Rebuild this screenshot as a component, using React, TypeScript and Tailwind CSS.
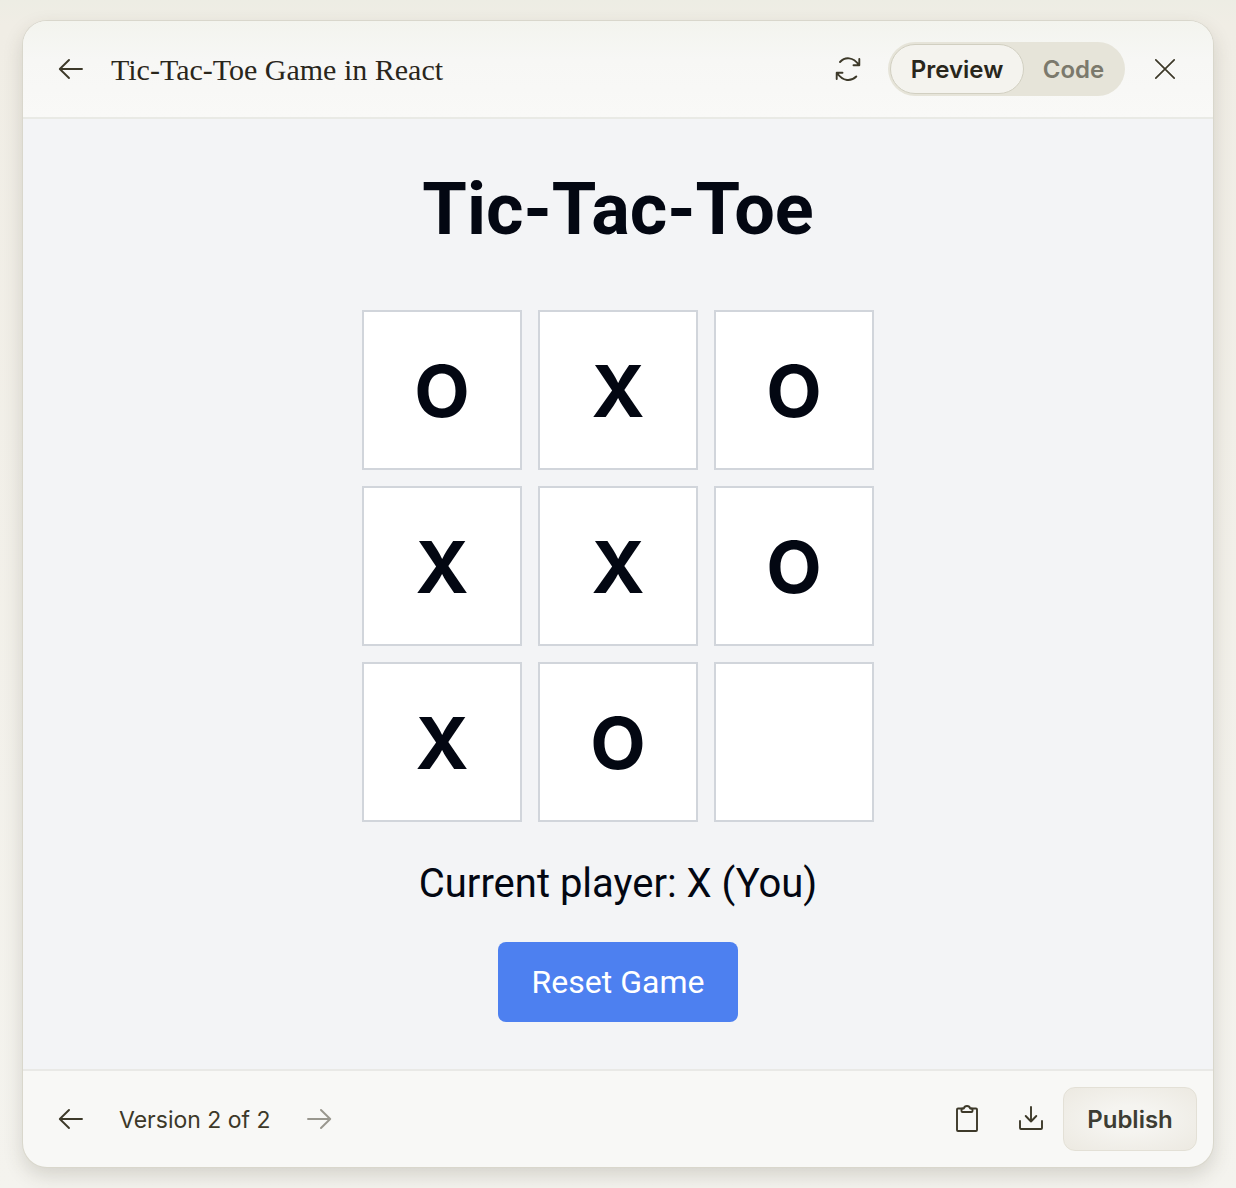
import { useState } from "react";
import type { ReactNode } from "react";

function Icon({ children }: { children: ReactNode }) {
  return (
    <svg
      className="size-8"
      viewBox="0 0 32 32"
      fill="none"
      stroke="currentColor"
      strokeWidth="1.9"
      strokeLinecap="round"
      strokeLinejoin="round"
      aria-hidden="true"
    >
      {children}
    </svg>
  );
}

function ArrowLeft() {
  return (
    <Icon>
      <path d="M27 16H5M14 7 4.800 16l9.200 9" />
    </Icon>
  );
}

const iconButton =
  "flex size-16 shrink-0 items-center justify-center rounded-xl text-[#3d3929] disabled:opacity-50";

export default function App() {
  const [board, setBoard] = useState(["O", "X", "O", "X", "X", "O", "X", "O", ""]);
  const play = (i: number) => {
    if (!board[i]) setBoard(board.map((v, n) => (n === i ? "X" : v)));
  };

  return (
    <div className="min-h-screen bg-linear-to-b from-[#edede4] via-[#f0ede5] via-2% to-[#f4f3ee] px-[23px] py-[21px] font-['Inter',sans-serif]">
      <main className="flex min-h-[calc(100vh-42px)] flex-col overflow-hidden rounded-3xl bg-[#f8f8f6] shadow-[0_0_0_1px_#d9d7cc,0_8px_20px_rgba(61,57,41,0.18)]">
        <header className="flex h-[98px] items-center border-b-2 border-[#e9eae5] bg-linear-to-b from-[#f3f4ee] via-[#f7f7f5] via-40% to-[#f9f9f7] px-4">
          <button type="button" aria-label="Back" className={iconButton}>
            <ArrowLeft />
          </button>
          <h1 className="ml-2 flex-1 pt-0.5 font-['Liberation_Serif',serif] text-[30px] leading-9 text-[#29261b]">
            Tic-Tac-Toe Game in React
          </h1>
          <button type="button" aria-label="Refresh" className={iconButton}>
            <Icon>
              <path d="M8 9C13 3.600 21 3.600 27 12M27.300 6v6.300H21.500" />
              <path d="M24.300 23.500C19 28.700 11 28.700 5 20M4.700 26v-6.300h5.800" />
            </Icon>
          </button>
          <div className="mx-2 flex h-[54px] items-center rounded-full bg-[#e6e4d9] px-0.5 text-2xl font-semibold">
            <button
              type="button"
              aria-pressed="true"
              className="h-[50px] w-[134px] rounded-full border border-[#d1cfc1] bg-[#f4f3ee] pt-0.5 text-[#29261b]"
            >
              Preview
            </button>
            <button type="button" aria-pressed="false" className="h-[50px] w-[99px] rounded-full pt-0.5 text-[#7b796c]">
              Code
            </button>
          </div>
          <button type="button" aria-label="Close" className={iconButton}>
            <Icon>
              <path d="m6.800 6.800 18.400 18.400M25.200 6.800 6.800 25.200" strokeWidth="1.700" />
            </Icon>
          </button>
        </header>

        <section className="flex flex-1 flex-col items-center bg-[#f3f4f6] pt-[55px] pb-11 text-[#030712]">
          <h2 className="font-['Roboto',sans-serif] text-[72px] leading-[72px] font-bold">Tic-Tac-Toe</h2>
          <div className="mt-16 grid grid-cols-3 gap-4">
            {board.map((value, i) => (
              <button
                key={i}
                type="button"
                aria-label={value ? undefined : "Empty square"}
                onClick={() => play(i)}
                className="size-40 border-2 border-[#d1d5db] bg-white pt-0.5 text-[72px] leading-none font-bold"
              >
                {value}
              </button>
            ))}
          </div>
          <p className="mt-9 font-['Roboto',sans-serif] text-[40px] leading-[52px]">Current player: X (You)</p>
          <button
            type="button"
            onClick={() => setBoard(Array(9).fill(""))}
            className="mt-8 h-20 min-w-60 rounded-lg bg-[#4d80f0] px-8 font-['Roboto',sans-serif] text-[32px] text-white"
          >
            Reset Game
          </button>
        </section>

        <footer className="flex h-[98px] items-center border-t-2 border-[#e9e9e6] px-4">
          <button type="button" aria-label="Previous version" className={iconButton}>
            <ArrowLeft />
          </button>
          <span className="mx-4 pt-0.5 text-[23px] text-[#3d3929]">Version 2 of 2</span>
          <button type="button" aria-label="Next version" disabled className={iconButton}>
            <Icon>
              <path d="M5 16h22M18 7l9.200 9-9.200 9" />
            </Icon>
          </button>
          <div className="ml-auto flex items-center">
            <button type="button" aria-label="Copy" className={iconButton}>
              <Icon>
                <path d="M11.500 5.500H7a1 1 0 0 0-1 1V27a1 1 0 0 0 1 1h18a1 1 0 0 0 1-1V6.500a1 1 0 0 0-1-1h-4.500" />
                <path d="M12.800 5.500C13.200 3.900 14.500 3 16 3s2.800.9 3.200 2.500h1.300a1 1 0 0 1 1 1V8a1 1 0 0 1-1 1h-9a1 1 0 0 1-1-1V6.500a1 1 0 0 1 1-1z" />
              </Icon>
            </button>
            <button type="button" aria-label="Download" className={iconButton}>
              <Icon>
                <path d="M16 4v14.500M10.700 13l5.300 5.500 5.300-5.500M5 18v7a1 1 0 0 0 1 1h20a1 1 0 0 0 1-1v-7" />
              </Icon>
            </button>
            <button
              type="button"
              className="h-16 w-[134px] rounded-xl border border-[#e3e0d6] bg-radial from-[#f5f4f0] from-30% to-[#ece9e1] pt-0.5 text-2xl font-semibold text-[#3d3d33]"
            >
              Publish
            </button>
          </div>
        </footer>
      </main>
    </div>
  );
}
